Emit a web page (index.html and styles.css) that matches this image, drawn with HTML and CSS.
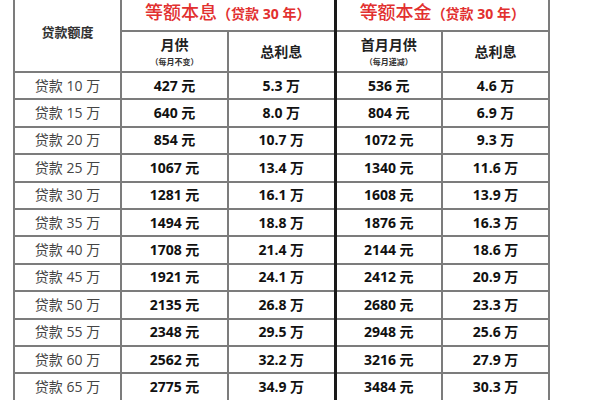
FILE: index.html
```html
<!DOCTYPE html>
<html lang="zh-CN">
<head>
<meta charset="utf-8">
<title>贷款额度</title>
<link rel="stylesheet" href="styles.css">
</head>
<body>
<div class="frame">
<table class="loan">
<colgroup><col class="c"><col class="c"><col class="c"><col class="c"><col class="c"></colgroup>
<thead>
<tr class="h1">
<th rowspan="2" class="amt">贷款额度</th>
<th colspan="2" class="title"><span class="big">等额本息</span><span class="paren">（贷款 30 年）</span></th>
<th colspan="2" class="title sep"><span class="big">等额本金</span><span class="paren">（贷款 30 年）</span></th>
</tr>
<tr class="h2">
<th class="sub"><span class="main">月供</span><span class="note">（每月不变）</span></th>
<th class="tot">总利息</th>
<th class="sub sep"><span class="main">首月月供</span><span class="note">（每月递减）</span></th>
<th class="tot">总利息</th>
</tr>
</thead>
<tbody>
<tr><td class="lbl">贷款 10 万</td><td>427 元</td><td>5.3 万</td><td class="sep">536 元</td><td>4.6 万</td></tr>
<tr><td class="lbl">贷款 15 万</td><td>640 元</td><td>8.0 万</td><td class="sep">804 元</td><td>6.9 万</td></tr>
<tr><td class="lbl">贷款 20 万</td><td>854 元</td><td>10.7 万</td><td class="sep">1072 元</td><td>9.3 万</td></tr>
<tr><td class="lbl">贷款 25 万</td><td>1067 元</td><td>13.4 万</td><td class="sep">1340 元</td><td>11.6 万</td></tr>
<tr><td class="lbl">贷款 30 万</td><td>1281 元</td><td>16.1 万</td><td class="sep">1608 元</td><td>13.9 万</td></tr>
<tr><td class="lbl">贷款 35 万</td><td>1494 元</td><td>18.8 万</td><td class="sep">1876 元</td><td>16.3 万</td></tr>
<tr><td class="lbl">贷款 40 万</td><td>1708 元</td><td>21.4 万</td><td class="sep">2144 元</td><td>18.6 万</td></tr>
<tr><td class="lbl">贷款 45 万</td><td>1921 元</td><td>24.1 万</td><td class="sep">2412 元</td><td>20.9 万</td></tr>
<tr><td class="lbl">贷款 50 万</td><td>2135 元</td><td>26.8 万</td><td class="sep">2680 元</td><td>23.3 万</td></tr>
<tr><td class="lbl">贷款 55 万</td><td>2348 元</td><td>29.5 万</td><td class="sep">2948 元</td><td>25.6 万</td></tr>
<tr><td class="lbl">贷款 60 万</td><td>2562 元</td><td>32.2 万</td><td class="sep">3216 元</td><td>27.9 万</td></tr>
<tr><td class="lbl">贷款 65 万</td><td>2775 元</td><td>34.9 万</td><td class="sep">3484 元</td><td>30.3 万</td></tr>
</tbody>
</table>
</div>
</body>
</html>
```

FILE: styles.css
```css
html, body {
  margin: 0;
  padding: 0;
  background: #fff;
}
.frame {
  width: 600px;
  height: 400px;
  overflow: hidden;
}
.loan {
  margin: -8px 0 0 13px;
  width: 536px;
  border-collapse: collapse;
  table-layout: fixed;
  font-family: "Open Sans", "Noto Sans CJK SC", sans-serif;
  color: #111;
}
.loan col.c { width: 107px; }
.loan th, .loan td {
  border: 2px solid #7c7c7c;
  padding: 0;
  text-align: center;
  vertical-align: middle;
  line-height: 1;
}
.loan .sep { border-left: 3px solid #1a1a1a; }
.h1 th { height: 36px; }
.h2 th { height: 39px; }
.amt {
  font-size: 13px;
  font-weight: 700;
  color: #333;
  padding-bottom: 2px;
}
.title {
  color: #e2302f;
  white-space: nowrap;
}
.title .big {
  font-size: 18px;
  font-weight: 500;
}
.title .paren {
  font-size: 14px;
  font-weight: 700;
}
.sub .main {
  display: block;
  font-size: 14px;
  font-weight: 700;
  color: #222;
}
.sub .note {
  display: block;
  margin-top: 6px;
  font-size: 8px;
  font-weight: 700;
  color: #333;
}
.tot {
  font-size: 14px;
  font-weight: 700;
  color: #222;
}
.loan tbody td {
  height: 25.4px;
  font-size: 14px;
  font-weight: 700;
}
.loan tbody td.lbl {
  font-weight: 400;
  color: #444;
}
```
